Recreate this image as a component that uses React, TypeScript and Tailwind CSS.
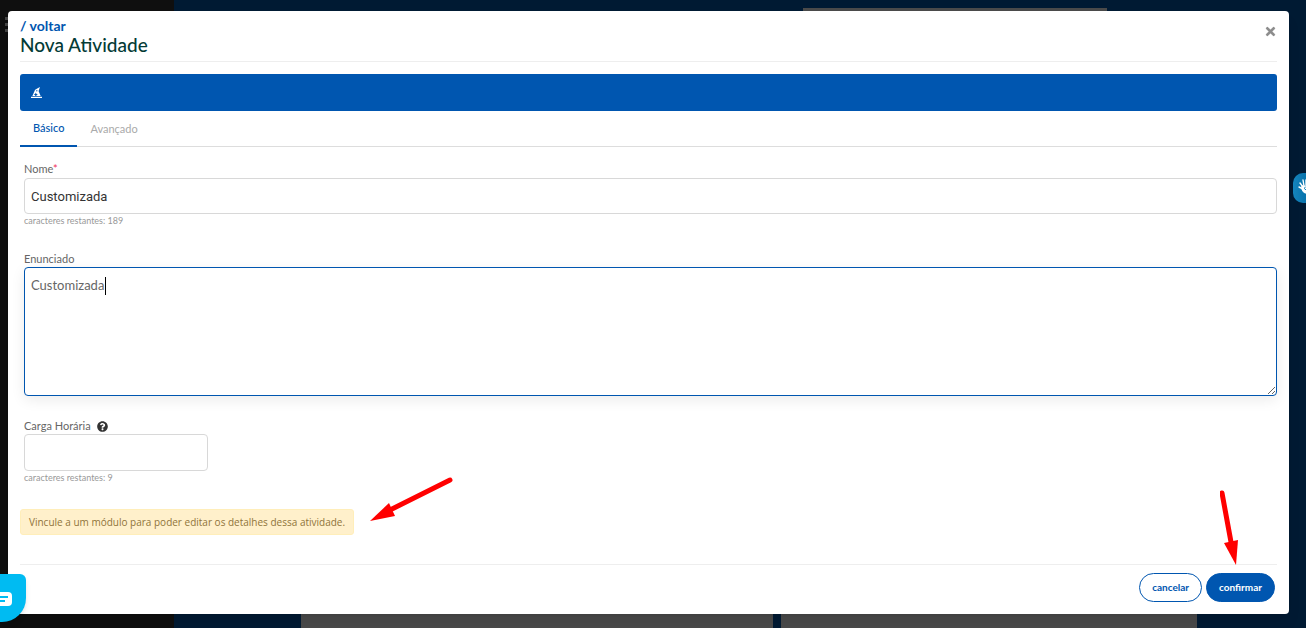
import { useState } from 'react';
import clsx from 'clsx';
import { FaHatWizard, FaQuestionCircle, FaTimes } from 'react-icons/fa';

const fieldClass = 'block rounded border bg-white px-1.5 text-[13px] outline-none';
const labelClass = 'text-[11px] leading-4 text-[#666]';
const hintClass = 'text-[9px] leading-3 text-[#999]';

const tabs = ['Básico', 'Avançado'];

function Backdrop() {
  return (
    <div className="absolute inset-0 flex" aria-hidden="true">
      <div className="w-[174px] shrink-0 bg-[#0f0f0f]" />
      <div className="flex flex-1 flex-col justify-between bg-[#001a33] pl-[127px] pr-[109px]">
        <div className="flex h-4 justify-end pr-[90px] pt-2">
          <div className="w-[304px] bg-[#4a4a4a]" />
        </div>
        <div className="flex h-5 gap-2">
          <div className="w-[472px] bg-[#4a4a4a]" />
          <div className="flex-1 bg-[#4a4a4a]" />
        </div>
      </div>
      <div className="absolute left-[5px] top-[17px] flex flex-col gap-[3px]">
        <span className="size-[3px] bg-[#444]" />
        <span className="size-[3px] bg-[#444]" />
        <span className="size-[3px] bg-[#444]" />
      </div>
    </div>
  );
}

function Arrows() {
  return (
    <>
      <svg className="pointer-events-none absolute left-[370px] top-[476px]" width="86" height="48" fill="#f00" aria-hidden="true">
        <path d="M80 4 20 34" stroke="#f00" strokeWidth="5" strokeLinecap="round" />
        <path d="M0 45 19 27 25 40Z" />
      </svg>
      <svg className="pointer-events-none absolute right-[66px] top-[488px]" width="20" height="78" fill="#f00" aria-hidden="true">
        <path d="M2 5 11 54" stroke="#f00" strokeWidth="5" strokeLinecap="round" />
        <path d="M16 77 4 55 18 52Z" />
      </svg>
    </>
  );
}

function ChatWidget() {
  return (
    <button
      type="button"
      aria-label="Chat"
      className="absolute bottom-1.5 left-0 h-12 w-[26px] rounded-tr-md rounded-br-[24px] bg-[#00bbf2] shadow-md"
    >
      <svg width="26" height="48" viewBox="0 0 26 48" aria-hidden="true">
        <path d="M-8 18H8q4 0 4 4v6q0 4-4 4H-8z" fill="#fff" />
        <path d="M-4 23H8M-4 27H5" stroke="#00bbf2" strokeWidth="2" />
      </svg>
    </button>
  );
}

function LibrasWidget() {
  return (
    <button
      type="button"
      aria-label="Libras"
      className="absolute right-0 top-[173px] h-[30px] w-[13px] overflow-hidden rounded-l-[10px] bg-linear-to-r from-[#1585bd] to-[#0873ac]"
    >
      <svg width="13" height="30" viewBox="0 0 13 30" fill="none" stroke="#fff" strokeLinecap="round" aria-hidden="true">
        <path d="M7 10l3 4M10 7l1 6M13 7v5M6 14l4 2" strokeWidth="1.4" />
        <path d="M9 13h5v7h-2q-4-2-3-7z" fill="#fff" strokeWidth="1" />
        <path d="M12 14q-2 2 1 3" stroke="#1585bd" strokeWidth="1" />
      </svg>
    </button>
  );
}

export default function App() {
  const [tab, setTab] = useState('Básico');
  const [nome, setNome] = useState('Customizada');
  const [enunciado, setEnunciado] = useState('Customizada');
  const [carga, setCarga] = useState('');

  return (
    <div className="relative min-h-screen overflow-hidden font-['Lato','Liberation_Sans',sans-serif]">
      <Backdrop />

      <div className="relative pb-3.5 pl-2 pr-[17px] pt-[11px]">
        <div role="dialog" aria-labelledby="titulo" className="rounded bg-white px-3 pb-3 pt-1.5 shadow-lg">
          <header className="flex items-start justify-between border-b border-[#eee] pb-1.5">
            <div>
              <a href="#" className="block text-sm leading-[18px] font-bold text-[#0056b0]">/ voltar</a>
              <h1 id="titulo" className="text-[19px] leading-5 font-medium text-[#043b36]">Nova Atividade</h1>
            </div>
            <button type="button" aria-label="Fechar" className="mt-2 text-[#8c8c8c]">
              <FaTimes size={13} stroke="currentColor" strokeWidth={10} />
            </button>
          </header>

          <div className="mt-3 flex h-[37px] items-center rounded-[3px] bg-[#0056b0] pl-[11px] text-white">
            <FaHatWizard size={11} />
          </div>

          <div role="tablist" className="flex h-9 border-b border-[#ddd]">
            {tabs.map((t) => (
              <button
                key={t}
                type="button"
                role="tab"
                aria-selected={tab === t}
                onClick={() => setTab(t)}
                className={clsx(
                  '-mb-px px-[13px] text-[11px]',
                  tab === t ? 'border-b-2 border-[#0056b0] font-medium text-[#0056b0]' : 'text-[#aaa]'
                )}
              >
                {t}
              </button>
            ))}
          </div>

          <form onSubmit={(e) => e.preventDefault()}>
            <div className="flex flex-col pl-1 pt-3.5">
              <label htmlFor="nome" className={labelClass}>
                Nome<span className="text-[#f0325a]">*</span>
              </label>
              <input
                id="nome"
                value={nome}
                onChange={(e) => setNome(e.target.value)}
                className={clsx(fieldClass, "mt-px h-9 w-full border-[#d8d8d8] font-['Roboto',sans-serif] text-[#333]")}
              />
              <p className={clsx(hintClass, 'mt-px')}>caracteres restantes: 189</p>

              <label htmlFor="enunciado" className={clsx(labelClass, 'mt-6')}>Enunciado</label>
              <div className="relative">
                <textarea
                  id="enunciado"
                  value={enunciado}
                  onChange={(e) => setEnunciado(e.target.value)}
                  className={clsx(fieldClass, 'h-[129px] w-full resize-y border-[#0056b0] pt-2 text-[#666] shadow-[0_4px_14px_rgba(0,0,0,0.08)]')}
                />
                <span className="absolute left-[81px] top-2.5 h-[18px] w-px bg-black" aria-hidden="true" />
              </div>

              <div className="mt-[22px] flex items-center gap-1.5">
                <label htmlFor="carga" className={labelClass}>Carga Horária</label>
                <FaQuestionCircle size={11} className="text-[#333]" />
              </div>
              <input
                id="carga"
                value={carga}
                onChange={(e) => setCarga(e.target.value)}
                className={clsx(fieldClass, 'h-[37px] w-46 border-[#d8d8d8] text-[#333]')}
              />
              <p className={clsx(hintClass, 'mt-px')}>caracteres restantes: 9</p>
            </div>

            <p className="mt-[25px] w-fit rounded-[3px] border border-[#ffeeba] bg-[#fff0cb] px-2 py-1 font-['Open_Sans',sans-serif] text-[10px] leading-4 text-[#8f743a]">
              Vincule a um módulo para poder editar os detalhes dessa atividade.
            </p>

            <footer className="mt-[29px] flex justify-end gap-1 border-t border-[#eee] pr-0.5 pt-2">
              <button type="button" className="h-[29px] rounded-full border border-[#0056b0] px-3 text-[10px] font-bold text-[#0056b0]">
                cancelar
              </button>
              <button type="submit" className="h-[29px] rounded-full border border-[#0056b0] bg-[#0056b0] px-3 text-[10px] font-bold text-white">
                confirmar
              </button>
            </footer>
          </form>
        </div>
      </div>

      <Arrows />
      <ChatWidget />
      <LibrasWidget />
    </div>
  );
}
